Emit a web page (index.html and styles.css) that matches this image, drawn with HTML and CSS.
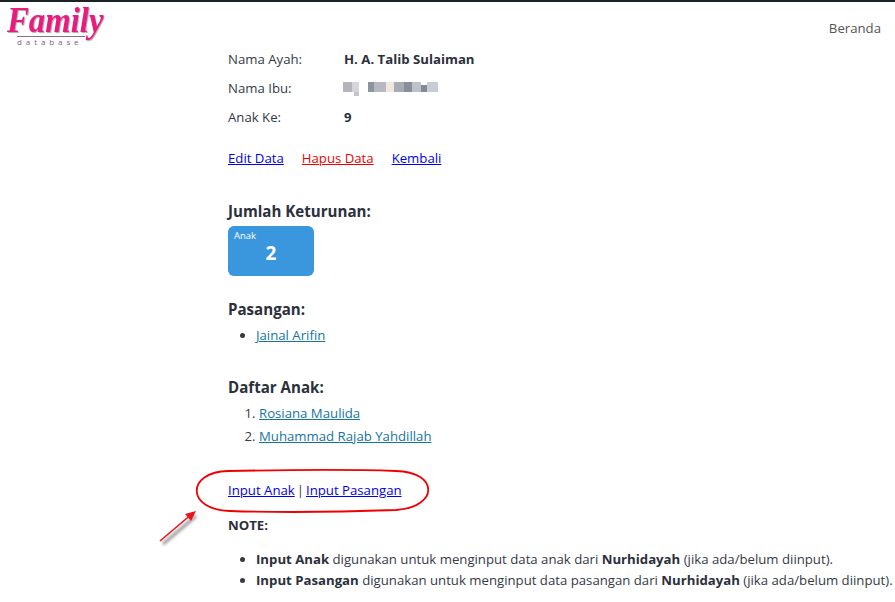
FILE: index.html
```html
<!DOCTYPE html>
<html>

<head>
    <link rel="stylesheet" href="styles.css">
    <title>Family Database</title>
</head>

<body>
    <nav class="navbar">
        <a class="brand" href="#">
            <span class="brand-name">Family</span>
            <span class="brand-sub">database</span>
        </a>
        <a class="nav-link" href="#">Beranda</a>
    </nav>

    <div class="content">
        <div class="info-row">
            <span class="info-label">Nama Ayah:</span>
            <b>H. A. Talib Sulaiman</b>
        </div>
        <div class="info-row">
            <span class="info-label">Nama Ibu:</span>
            <svg class="blur-name" width="96" height="16" viewBox="0 0 96 16">
                <rect x="0" y="2" width="9" height="10" fill="#b4b4ba" />
                <rect x="9" y="2" width="7" height="10" fill="#d6d6da" />
                <rect x="11" y="12" width="5" height="4" fill="#c4c4ca" />
                <rect x="25" y="2" width="6" height="10" fill="#8e93a0" />
                <rect x="31" y="2" width="12" height="10" fill="#b6b8c2" />
                <rect x="43" y="2" width="8" height="10" fill="#f0e8e0" />
                <rect x="51" y="2" width="10" height="10" fill="#a8abb6" />
                <rect x="61" y="2" width="8" height="10" fill="#8a8e9a" />
                <rect x="69" y="2" width="9" height="10" fill="#c0c2ca" />
                <rect x="78" y="5" width="6" height="7" fill="#858995" />
                <rect x="84" y="2" width="11" height="10" fill="#c8ccd4" />
            </svg>
        </div>
        <div class="info-row">
            <span class="info-label">Anak Ke:</span>
            <b>9</b>
        </div>

        <div class="actions">
            <a href="#">Edit Data</a>
            <a class="danger" href="#">Hapus Data</a>
            <a href="#">Kembali</a>
        </div>

        <h3 class="first-title">Jumlah Keturunan:</h3>
        <div class="count-box">
            <div class="count-label">Anak</div>
            <div class="count-value">2</div>
        </div>

        <h3 class="title-pasangan">Pasangan:</h3>
        <ul class="person-list">
            <li><a href="#">Jainal Arifin</a></li>
        </ul>

        <h3 class="title-anak">Daftar Anak:</h3>
        <ol class="person-list numbered">
            <li><a href="#">Rosiana Maulida</a></li>
            <li><a href="#">Muhammad Rajab Yahdillah</a></li>
        </ol>

        <p class="input-links"><a href="#">Input Anak</a><span class="sep">|</span><a href="#">Input Pasangan</a></p>

        <p class="note-title"><b>NOTE:</b></p>
        <ul class="note-list">
            <li><b>Input Anak</b> digunakan untuk menginput data anak dari <b>Nurhidayah</b> (jika ada/belum diinput).</li>
            <li><b>Input Pasangan</b> digunakan untuk menginput data pasangan dari <b>Nurhidayah</b> (jika ada/belum diinput).</li>
        </ul>
    </div>

    <!-- red marks drawn over the screenshot -->
    <svg class="marks" width="895" height="602" viewBox="0 0 895 602">
        <defs>
            <filter id="soft" x="-30%" y="-30%" width="160%" height="160%">
                <feGaussianBlur stdDeviation="1.5" />
            </filter>
        </defs>
        <path d="M163 544 L196 516" stroke="#999" stroke-width="3" fill="none" filter="url(#soft)" />
        <path d="M160 541 L193 513" stroke="#e8141c" stroke-width="1.6" fill="none" />
        <path d="M196 511 L185 514 L191 521 Z" fill="#e8141c" />
        <path d="M228 471 C186 472 186 510 230 511 C290 513 340 512 396 510 C439 507 439 472 396 471 C340 469 280 470 228 471 Z" stroke="#f00000" stroke-width="1.8" fill="none" />
    </svg>
</body>

</html>
```

FILE: styles.css
```css
html,
body {
    height: 100%;
}

body {
    margin: 0;
    border-top: 2px solid #1c2326;
    box-sizing: border-box;
    overflow: hidden;
    position: relative;
    font-family: "Open Sans", "Noto Sans", sans-serif;
    font-size: 13.2px;
    color: #363a45;
    background: #fff;
}

.navbar {
    height: 42px;
    display: flex;
    justify-content: space-between;
    align-items: flex-start;
}

.brand {
    display: flex;
    flex-direction: column;
    padding: 3px 0 0 7px;
    text-decoration: none;
    color: #ea1a7f;
}

.brand-name {
    width: 96px;
    font-family: "Liberation Serif", serif;
    font-style: italic;
    font-weight: bold;
    font-size: 36px;
    line-height: 31px;
    transform: scaleX(0.91);
    transform-origin: left;
    text-shadow: 1px 1px 1px #aaa;
}

.brand-sub {
    margin: 0 0 0 10px;
    width: 68px;
    border-top: 1px solid #8e6a9a;
    font-size: 8px;
    line-height: 10px;
    letter-spacing: 3.9px;
    color: #7a5a8a;
}

.nav-link {
    margin: 17px 14px 0 0;
    color: #555;
    text-decoration: none;
}

.content {
    margin: 0 0 0 228px;
    white-space: nowrap;
}

.info-row {
    height: 29px;
    display: flex;
    align-items: center;
}

.info-label {
    width: 116px;
}

b,
h3 {
    color: #2b303b;
}

.blur-name {
    display: block;
    margin-left: -1px;
}

.actions {
    margin-top: 12px;
    display: flex;
    gap: 18px;
    height: 29px;
    align-items: center;
}

a {
    color: #0000ee;
}

a.danger {
    color: #f00000;
}

h3 {
    margin: 0;
    font-size: 15.1px;
    line-height: 22px;
}

.first-title {
    margin-top: 28px;
}

.count-box {
    margin-top: 4px;
    width: 86px;
    height: 50px;
    box-sizing: border-box;
    padding: 4px 6px;
    border-radius: 6px;
    background: #3a97de;
    color: #fff;
}

.count-label {
    font-size: 9.5px;
    line-height: 12px;
}

.count-value {
    text-align: center;
    font-size: 19px;
    font-weight: bold;
    line-height: 22px;
}

.title-pasangan {
    margin-top: 22px;
}

.title-anak {
    margin-top: 29px;
}

.person-list {
    margin: 4px 0 0;
    padding-left: 28px;
    line-height: 23px;
}

.numbered {
    padding-left: 31px;
}

.person-list a {
    color: #16759f;
}

.input-links {
    margin: 31px 0 0;
    line-height: 22px;
}

.sep {
    margin: 0 2px;
}

.note-title {
    margin: 13px 0 0;
    line-height: 22px;
}

.note-list {
    margin: 13px 0 0;
    padding-left: 28px;
    line-height: 21px;
}

.marks {
    position: absolute;
    top: -2px;
    left: 0;
    pointer-events: none;
}
```
